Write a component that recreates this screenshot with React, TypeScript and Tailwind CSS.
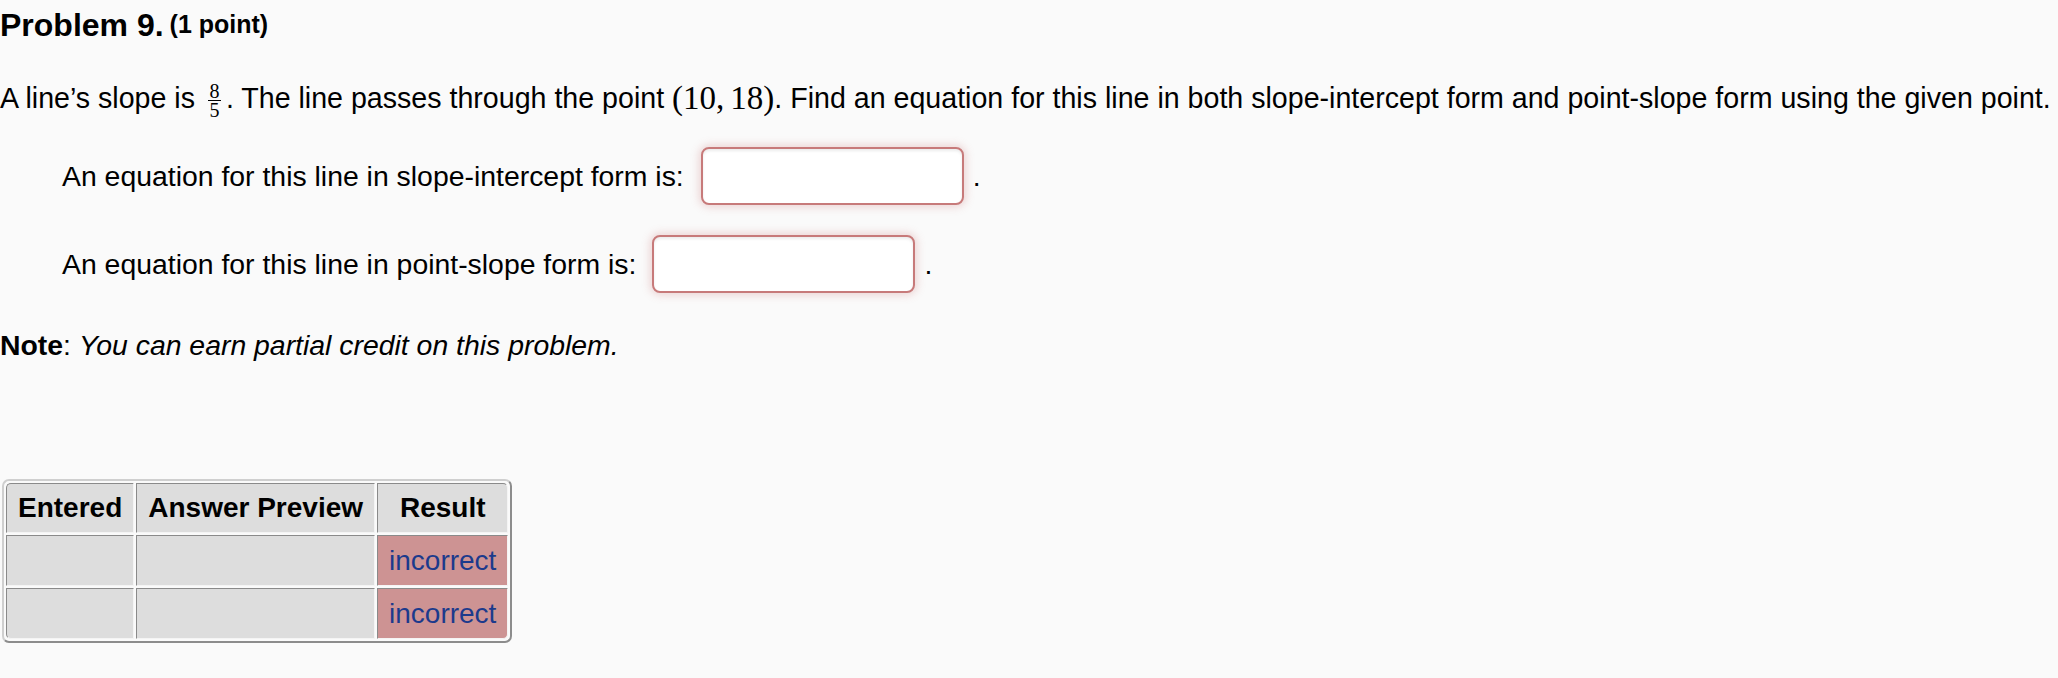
import React from "react";

function AnswerBox() {
  return (
    <div className="h-[58px] w-[263px] rounded-[8px] border-2 border-[#c77a7a] bg-white shadow-[0_0_8px_2px_rgba(200,110,110,0.28),inset_0_2px_3px_rgba(0,0,0,0.08)]" />
  );
}

export default function App() {
  const cell =
    "border border-solid border-t-[#8a8a8a] border-l-[#8a8a8a] border-r-[#f4f4f4] border-b-[#f4f4f4] bg-[#dddddd] px-[11px] py-[8px] leading-[32px]";
  const bad =
    "border border-solid border-t-[#8a8a8a] border-l-[#8a8a8a] border-r-[#f4f4f4] border-b-[#f4f4f4] bg-[#cd9393] px-[11px] py-[8px] leading-[33px] text-[#1c3a8c] text-center";
  return (
    <div className="min-h-[678px] w-[2058px] bg-[#fafafa] font-['Liberation_Sans',Arial,sans-serif] text-[28px] text-black">
      <div className="flex h-[50px] items-center">
        <span className="text-[32px] font-bold">Problem 9.</span>
        <span className="ml-[6px] text-[25px] font-bold">(1 point)</span>
      </div>

      <div className="mt-[28px] flex h-[40px] items-center whitespace-nowrap text-[28.6px]">
        <span>A line’s slope is&nbsp;</span>
        <span className="mx-[5px] inline-flex flex-col items-center font-['Liberation_Serif',serif] text-[20px] leading-[16px] translate-y-[2px]">
          <span>8</span>
          <span className="my-[1px] h-[1px] w-[13px] bg-black" />
          <span>5</span>
        </span>
        <span>. The line passes through the point&nbsp;</span>
        <span className="font-['Liberation_Serif',serif] text-[33px] leading-[40px]">
          (10,<span className="ml-[6px]">18</span>)
        </span>
        <span>. Find an equation for this line in both slope-intercept form and point-slope form using the given point.</span>
      </div>

      <div className="mt-[29px] flex items-center pl-[62px] text-[28.4px]">
        <span>An equation for this line in slope-intercept form is:</span>
        <div className="ml-[17px]">
          <AnswerBox />
        </div>
        <span className="ml-[9px]">.</span>
      </div>

      <div className="mt-[30px] flex items-center pl-[62px] text-[28.4px]">
        <span>An equation for this line in point-slope form is:</span>
        <div className="ml-[16px]">
          <AnswerBox />
        </div>
        <span className="ml-[9px]">.</span>
      </div>

      <div className="mt-[32px] flex h-[40px] items-center text-[28.4px]">
        <span className="font-bold">Note</span>
        <span>:&nbsp;</span>
        <span className="italic">You can earn partial credit on this problem.</span>
      </div>

      <div className="mt-[114px] pl-[2px]">
        <table className="border-separate border-spacing-[2px] rounded-[7px] border-2 border-solid border-t-[#cfcfcf] border-l-[#cfcfcf] border-r-[#8c8c8c] border-b-[#8c8c8c]">
          <thead>
            <tr>
              <th className={cell + " rounded-tl-[5px] font-bold"}>Entered</th>
              <th className={cell + " font-bold"}>Answer Preview</th>
              <th className={cell + " rounded-tr-[5px] font-bold"}>Result</th>
            </tr>
          </thead>
          <tbody>
            <tr>
              <td className={cell}></td>
              <td className={cell}></td>
              <td className={bad}>incorrect</td>
            </tr>
            <tr>
              <td className={cell + " rounded-bl-[5px]"}></td>
              <td className={cell}></td>
              <td className={bad + " rounded-br-[5px]"}>incorrect</td>
            </tr>
          </tbody>
        </table>
      </div>
    </div>
  );
}
